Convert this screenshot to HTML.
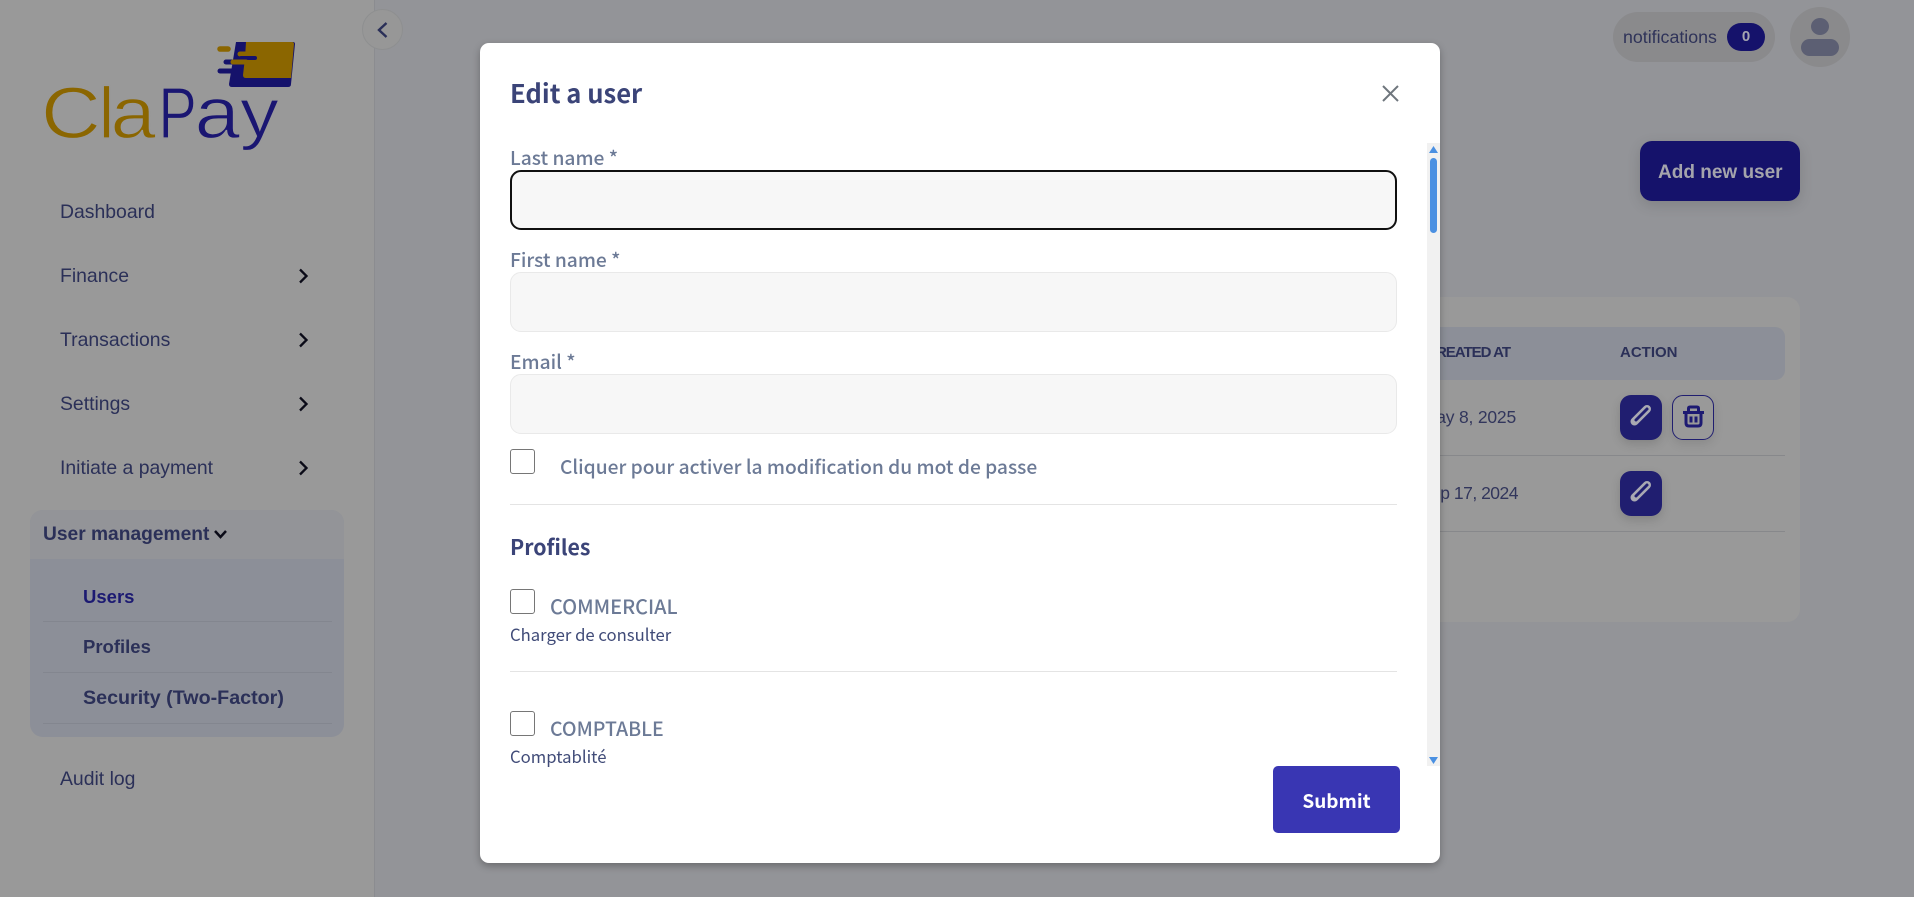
<!DOCTYPE html>
<html lang="en"><head><meta charset="utf-8"><title>Users</title>
<style>
html,body{margin:0;padding:0;background:#fff;width:1919px;height:913px;overflow:hidden}
*{box-sizing:border-box}
#app{position:absolute;left:0;top:0;width:1914px;height:897px;background:#939498;overflow:hidden;font-family:"Liberation Sans",sans-serif}
.t{position:absolute;white-space:nowrap;line-height:20px;height:20px}
.b{position:absolute}
.s{font-size:19.4px;color:#2b3058}
.sb{font-size:18.5px;font-weight:700;color:#2b3058}
.m{font-family:"Noto Sans CJK JP","Liberation Sans",sans-serif}
.lab{font-size:19.2px;color:#6c7a96;font-weight:500}
.inp{position:absolute;left:510px;width:887px;height:60px;background:#f7f7f7;border:1px solid #e9e9e9;border-radius:11px}
.cb{position:absolute;left:510px;width:25px;height:25px;background:#fff;border:1.5px solid #767676;border-radius:3px}
.hr{position:absolute;left:510px;width:887px;height:1px;background:#e4e4e4}
svg{position:absolute;overflow:visible}
</style></head><body>
<div id="app">
  <!-- sidebar -->
  <div class="b" style="left:0;top:0;width:375px;height:897px;background:#999;border-right:1px solid #8b8c90"></div>

  <svg style="left:0;top:0" width="375" height="170">
    <g font-family="Liberation Sans" font-size="72" stroke="#999" stroke-width="1.2">
      <text transform="translate(41 138) scale(1.15 1)" fill="#8b6600">C</text>
      <text transform="translate(98.500 138)" fill="#8b6600">l</text>
      <text transform="translate(110.500 138) scale(1.13 1)" fill="#8b6600">a</text>
      <text transform="translate(158.400 138) scale(.8 1)" fill="#1a1672">P</text>
      <text transform="translate(194.600 138) scale(1.13 1)" fill="#1a1672">a</text>
      <text transform="translate(240 136) scale(1.08 .96)" fill="#1a1672">y</text>
    </g>
    <path d="M236 42H293q2 0 2 2L291 84q0 3-3 3H232q-3 0-3-3z" fill="#15126b"/>
    <path d="M246 42H292q2 0 2 2L291 78H246q-3 0-3-3L245 58z" fill="#8b6600"/>
    <g stroke-linecap="round" stroke-width="5" fill="none">
      <path d="M220 49H228" stroke="#8b6600" stroke-width="5.500"/>
      <path d="M240 54H250" stroke="#8b6600"/>
      <path d="M241 58H255" stroke="#15126b" stroke-width="4"/>
      <path d="M226 62H238" stroke="#15126b"/>
      <path d="M233 62H246" stroke="#8b6600"/>
      <path d="M220 71H240" stroke="#15126b"/>
    </g>
  </svg>

  <div class="b" style="left:362px;top:9px;width:41px;height:41px;border-radius:50%;background:#979797;border:1px solid #8e8f90"></div>
  <svg style="left:376px;top:20px" width="14" height="20"><path d="M11 2.500 L3.500 9.500 L11 16.500" fill="none" stroke="#2a2f58" stroke-width="2.400" transform="translate(-.5 .5)"/></svg>

  <div class="t s" style="left:60px;top:202px">Dashboard</div>
  <div class="t s" style="left:60px;top:266px">Finance</div>
  <div class="t s" style="left:60px;top:330px">Transactions</div>
  <div class="t s" style="left:60px;top:394px">Settings</div>
  <div class="t s" style="left:60px;top:458px">Initiate a payment</div>
  <svg style="left:298px;top:267px" width="12" height="330" fill="none" stroke="#0b0b18" stroke-width="2.300">
    <path d="M2 2.500L8.500 9 2 15.500"/><path d="M2 66.500L8.500 73 2 79.500"/><path d="M2 130.500L8.500 137 2 143.500"/><path d="M2 194.500L8.500 201 2 207.500"/>
  </svg>

  <div class="b" style="left:30px;top:510px;width:314px;height:227px;border-radius:13px;background:#8c8f98;overflow:hidden">
    <div class="b" style="left:0;top:0;width:314px;height:49px;background:#939498"></div>
    <div class="b" style="left:13px;top:111px;width:289px;height:1px;background:#83868f"></div>
    <div class="b" style="left:13px;top:162px;width:289px;height:1px;background:#83868f"></div>
    <div class="b" style="left:13px;top:213px;width:289px;height:1px;background:#83868f"></div>
  </div>
  <div class="t sb" style="left:43px;top:525px;font-size:19.200px">User management</div>
  <svg style="left:213px;top:529px" width="16" height="12"><path d="M2 2L7.500 8 13 2" fill="none" stroke="#0b0b18" stroke-width="2.500"/></svg>
  <div class="t sb" style="left:83px;top:587px;color:#1c1a72">Users</div>
  <div class="t sb" style="left:83px;top:637px">Profiles</div>
  <div class="t sb" style="left:83px;top:688px;font-size:19.700px">Security (Two-Factor)</div>
  <div class="t s" style="left:60px;top:769px">Audit log</div>

  <!-- top bar -->
  <div class="b" style="left:1613px;top:12px;width:162px;height:50px;border-radius:25px;background:#8a8a8c"></div>
  <div class="t" style="left:1623px;top:27px;font-size:17.800px;color:#2f3359">notifications</div>
  <div class="b" style="left:1727px;top:23px;width:38px;height:28px;border-radius:14px;background:#15126b"></div>
  <div class="t" style="left:1727px;top:27px;width:38px;text-align:center;font-size:15px;font-weight:700;color:#a5a5b0">0</div>
  <div class="b" style="left:1790px;top:7px;width:60px;height:60px;border-radius:50%;background:#8a8a8c"></div>
  <div class="b" style="left:1811px;top:18px;width:18px;height:17px;border-radius:50%;background:#5c5f73"></div>
  <div class="b" style="left:1801px;top:39px;width:38px;height:17px;border-radius:9px;background:#5c5f73"></div>

  <div class="b" style="left:1640px;top:141px;width:160px;height:60px;border-radius:12px;background:#15126b;box-shadow:0 4px 14px rgba(0,0,0,.13)"></div>
  <div class="t" style="left:1658px;top:163px;font-size:19px;font-weight:700;color:#a4a4ac">Add new user</div>

  <!-- table card -->
  <div class="b" style="left:1300px;top:297px;width:500px;height:325px;border-radius:13px;background:#999"></div>
  <div class="b" style="left:1320px;top:327px;width:465px;height:53px;border-radius:10px;background:#8c8f98"></div>
  <div class="t" style="left:1410px;top:343px;width:100px;text-align:right;font-size:15px;letter-spacing:-1px;font-weight:700;color:#2b3058">CREATED AT</div>
  <div class="t" style="left:1620px;top:343px;font-size:15px;font-weight:700;color:#2b3058">ACTION</div>
  <div class="b" style="left:1320px;top:455px;width:465px;height:1px;background:#87888b"></div>
  <div class="b" style="left:1320px;top:531px;width:465px;height:1px;background:#87888b"></div>
  <div class="t" style="left:1400px;top:407px;width:116px;text-align:right;font-size:17.500px;letter-spacing:-.2px;color:#32365c">May 8, 2025</div>
  <div class="t" style="left:1400px;top:483px;width:118px;text-align:right;font-size:17.500px;letter-spacing:-.5px;color:#32365c">Sep 17, 2024</div>

  <div class="b" style="left:1620px;top:395px;width:42px;height:45px;border-radius:11px;background:#201e70;box-shadow:0 4px 10px rgba(0,0,0,.14)"></div>
  <div class="b" style="left:1672px;top:395px;width:42px;height:45px;border-radius:11px;border:1px solid #201e70;box-shadow:0 4px 10px rgba(0,0,0,.1)"></div>
  <div class="b" style="left:1620px;top:471px;width:42px;height:45px;border-radius:11px;background:#201e70;box-shadow:0 4px 10px rgba(0,0,0,.14)"></div>
  <svg style="left:1620px;top:395px" width="42" height="121" fill="none" stroke-linecap="round">
    <g><path d="M14.500 26.500L27 14" stroke="#a9a9b2" stroke-width="8"/><path d="M16 25L27 14" stroke="#201e70" stroke-width="3"/></g>
    <g transform="translate(0 76)"><path d="M14.500 26.500L27 14" stroke="#a9a9b2" stroke-width="8"/><path d="M16 25L27 14" stroke="#201e70" stroke-width="3"/></g>
  </svg>
  <svg style="left:1672px;top:395px" width="42" height="45" fill="none" stroke="#1d1a72" stroke-width="3">
    <path d="M11 17.500H32"/><path d="M16.500 17V13.500q0-1.500 1.500-1.500h7q1.500 0 1.500 1.500V17"/>
    <path d="M14 18V28q0 3 3 3h9q3 0 3-3V18"/><path d="M19 21.500V27.500M24 21.500V27.500"/>
  </svg>

  <!-- modal -->
  <div class="b" style="left:480px;top:43px;width:960px;height:820px;background:#fff;border-radius:9px;box-shadow:0 3px 8px rgba(0,0,0,.28)"></div>
  <div class="t m" style="left:510px;top:83px;font-size:25.600px;font-weight:700;color:#3b4478">Edit a user</div>
  <svg style="left:1382px;top:85px" width="17" height="17"><path d="M1 1L16 16M16 1L1 16" stroke="#6f767d" stroke-width="2"/></svg>

  <div class="t m lab" style="left:510px;top:147px">Last name *</div>
  <div class="inp" style="top:170px;height:60px;border:2px solid #101010"></div>
  <div class="t m lab" style="left:510px;top:249px">First name *</div>
  <div class="inp" style="top:272px"></div>
  <div class="t m lab" style="left:510px;top:351px">Email *</div>
  <div class="inp" style="top:374px"></div>
  <div class="cb" style="top:449px"></div>
  <div class="t m lab" style="left:560px;top:456px">Cliquer pour activer la modification du mot de passe</div>
  <div class="hr" style="top:504px"></div>
  <div class="t m" style="left:510px;top:537px;font-size:21.300px;font-weight:700;color:#3b4478">Profiles</div>
  <div class="cb" style="top:589px"></div>
  <div class="t m lab" style="left:550px;top:596px;font-size:19.900px">COMMERCIAL</div>
  <div class="t m" style="left:510px;top:624px;font-size:16.700px;color:#404b78">Charger de consulter</div>
  <div class="hr" style="top:671px"></div>
  <div class="cb" style="top:711px"></div>
  <div class="t m lab" style="left:550px;top:718px;font-size:19.500px">COMPTABLE</div>
  <div class="t m" style="left:510px;top:746px;font-size:16.700px;color:#404b78">Comptablité</div>

  <!-- scrollbar -->
  <div class="b" style="left:1427px;top:143px;width:13px;height:623px;background:#f1f1f1"></div>
  <div class="b" style="left:1430px;top:158px;width:7px;height:75px;border-radius:4px;background:#4a90e2"></div>
  <svg style="left:1429px;top:146px" width="9" height="620" fill="#4a90e2"><path d="M4.500 0L9 7H0z"/><path d="M0 611H9L4.500 618z"/></svg>

  <div class="b" style="left:1273px;top:766px;width:127px;height:67px;border-radius:5px;background:#3936b3"></div>
  <div class="t m" style="left:1273px;top:791px;width:127px;text-align:center;font-size:19px;font-weight:700;color:#fff">Submit</div>
</div>
</body></html>
